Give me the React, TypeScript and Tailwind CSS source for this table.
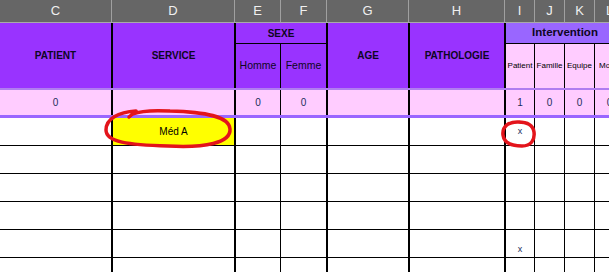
import React from "react";

const grid =
  "grid grid-cols-[111px_123px_46px_46px_82px_96px_30px_30px_30px_30px]";

const letters = ["C", "D", "E", "F", "G", "H", "I", "J", "K", "L"];

// left border weight for each column in the body of the sheet
const edge = [
  "",
  "border-l-2 border-black",
  "border-l-2 border-black",
  "border-l border-black",
  "border-l-2 border-black",
  "border-l-2 border-black",
  "border-l-2 border-black",
  "border-l border-black",
  "border-l border-black",
  "border-l border-black",
];

const totals = ["0", "", "0", "0", "", "", "1", "0", "0", "0"];

type Row = { cells: Record<number, React.ReactNode>; align?: "center" | "end" };

const rows: Row[] = [
  { cells: { 6: "x" } },
  { cells: {} },
  { cells: {} },
  { cells: {} },
  { cells: { 6: "x" }, align: "end" },
  { cells: {} },
];

export default function App() {
  return (
    <div
      className="relative w-[609px] h-[272px] overflow-hidden bg-white"
      style={{ fontFamily: '"Liberation Sans", Arial, sans-serif' }}
    >
      {/* column letters */}
      <div className={`${grid} h-[23px] bg-[#666666] border-b border-[#a9a9a9]`}>
        {letters.map((l, i) => (
          <div
            key={l}
            className={`flex items-center justify-center text-[13px] text-[#f0f0f0] ${
              i > 0 ? "border-l border-[#a0a0a0]" : ""
            }`}
          >
            {l}
          </div>
        ))}
      </div>

      {/* heading block */}
      <div className={`${grid} grid-rows-[21px_44px] bg-[#9933ff] text-[#0e0622]`}>
        <div className="col-start-1 row-start-1 row-span-2 flex items-center justify-center text-[10px] font-bold">
          PATIENT
        </div>
        <div className="col-start-2 row-start-1 row-span-2 flex items-center justify-center text-[10px] font-bold border-l-2 border-black">
          SERVICE
        </div>
        <div className="col-start-3 col-span-2 row-start-1 flex items-center justify-center text-[10px] font-bold border-l-2 border-b border-black">
          SEXE
        </div>
        <div className="col-start-3 row-start-2 flex items-center justify-center text-[10.5px] border-l-2 border-black">
          Homme
        </div>
        <div className="col-start-4 row-start-2 flex items-center justify-center text-[10.5px] border-l border-black">
          Femme
        </div>
        <div className="col-start-5 row-start-1 row-span-2 flex items-center justify-center text-[10px] font-bold border-l-2 border-black">
          AGE
        </div>
        <div className="col-start-6 row-start-1 row-span-2 flex items-center justify-center text-[10px] font-bold border-l-2 border-black">
          PATHOLOGIE
        </div>
        <div className="col-start-7 col-span-4 row-start-1 flex items-center justify-center text-[11.5px] font-bold bg-[#9966ff] border-l-2 border-b border-black">
          Intervention
        </div>
        {["Patient", "Famille", "Equipe", "Motif"].map((t, i) => (
          <div
            key={t}
            className={`row-start-2 flex items-center justify-center overflow-hidden whitespace-nowrap text-[8px] text-black bg-[#ffccff] ${
              i === 0
                ? "col-start-7 border-l-2 border-black"
                : i === 1
                ? "col-start-8 border-l border-black"
                : i === 2
                ? "col-start-9 border-l border-black"
                : "col-start-10 border-l border-black justify-start pl-[4px]"
            }`}
          >
            {t}
          </div>
        ))}
      </div>

      <div className="h-[2px] bg-[#b07df0]" />

      {/* totals */}
      <div className={`${grid} h-[25px] bg-[#ffccff]`}>
        {totals.map((v, i) => (
          <div
            key={i}
            className={`flex items-center justify-center text-[10px] text-[#1a2d5a] ${edge[i]}`}
          >
            {v}
          </div>
        ))}
      </div>

      <div className="h-[3px] bg-[#9966ff]" />

      {/* entries */}
      {rows.map((r, ri) => (
        <div key={ri} className={`${grid} h-[28px] border-b border-black`}>
          {letters.map((_, ci) => {
            const yellow = ri === 0 && ci === 1;
            return (
              <div
                key={ci}
                className={`flex justify-center ${
                  r.align === "end" ? "items-end pb-[1px]" : "items-center"
                } ${edge[ci]} ${yellow ? "bg-[#ffff00] text-[10px] text-black" : "text-[9px] text-[#1a2d5a]"}`}
              >
                {yellow ? "Méd A" : r.cells[ci]}
              </div>
            );
          })}
        </div>
      ))}

      {/* red pen marks */}
      <svg
        className="absolute inset-0 pointer-events-none"
        width="609"
        height="272"
        viewBox="0 0 609 272"
      >
        <path
          d="M129 117 L136 111 C118 112 106 119 106 130 C106 142 128 145 168 146 C205 148 231 143 230 129 C229 116 205 112 170 111 C152 110 140 111 133 114"
          fill="none"
          stroke="#e3141b"
          strokeWidth="3.5"
          strokeLinecap="round"
          strokeLinejoin="round"
        />
        <path
          d="M520 122 C508 121 502 127 503 135 C504 143 512 146 522 146 C531 146 535 140 534 132 C533 125 527 122 518 122"
          fill="none"
          stroke="#e3141b"
          strokeWidth="3.5"
          strokeLinecap="round"
        />
      </svg>
    </div>
  );
}
